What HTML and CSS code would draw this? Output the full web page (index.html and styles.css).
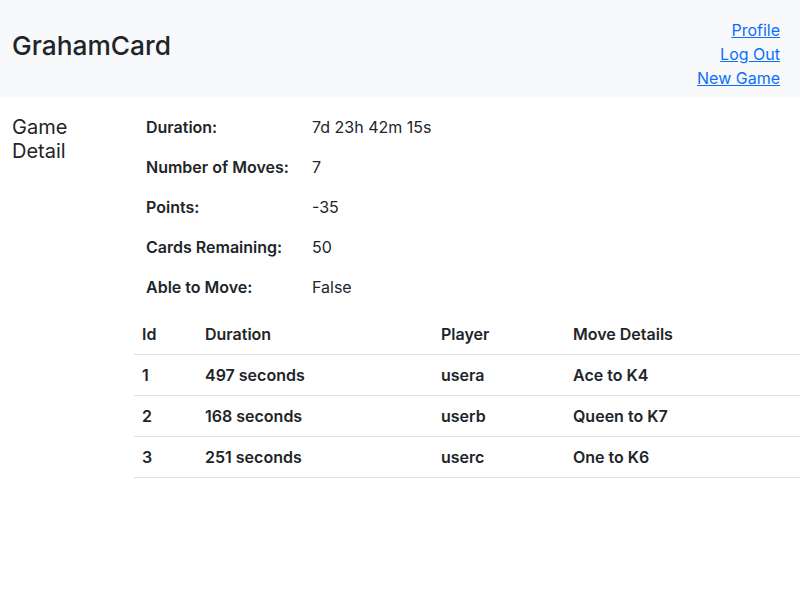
FILE: index.html
```html
<!DOCTYPE html>
<html lang="en">
<head>
<meta charset="utf-8">
<title>GrahamCard</title>
<link rel="stylesheet" href="styles.css">
</head>
<body>
<header class="topbar">
  <div class="brand">GrahamCard</div>
  <nav class="links">
    <a href="#">Profile</a>
    <a href="#">Log Out</a>
    <a href="#">New Game</a>
  </nav>
</header>
<main class="page">
  <aside class="side">
    <h2 class="side-title">Game Detail</h2>
  </aside>
  <section class="content">
    <dl class="details">
      <dt>Duration:</dt><dd>7d 23h 42m 15s</dd>
      <dt>Number of Moves:</dt><dd>7</dd>
      <dt>Points:</dt><dd>-35</dd>
      <dt>Cards Remaining:</dt><dd>50</dd>
      <dt>Able to Move:</dt><dd>False</dd>
    </dl>
    <table class="moves">
      <thead>
        <tr><th class="c-id">Id</th><th class="c-dur">Duration</th><th class="c-player">Player</th><th class="c-move">Move Details</th></tr>
      </thead>
      <tbody>
        <tr><td>1</td><td>497 seconds</td><td>usera</td><td>Ace to K4</td></tr>
        <tr><td>2</td><td>168 seconds</td><td>userb</td><td>Queen to K7</td></tr>
        <tr><td>3</td><td>251 seconds</td><td>userc</td><td>One to K6</td></tr>
      </tbody>
    </table>
  </section>
</main>
</body>
</html>
```
FILE: styles.css
```css
* { box-sizing: border-box; }
html, body {
  margin: 0;
  padding: 0;
  background: #fff;
  color: #212529;
  font-family: Inter, "Noto Sans", "Liberation Sans", sans-serif;
  font-size: 16px;
  line-height: 24px;
}
.topbar {
  display: flex;
  justify-content: space-between;
  align-items: flex-start;
  background: #f8f9fa;
  height: 97px;
  padding: 18px 20px 0 12px;
}
.brand {
  font-size: 26.3px;
  line-height: 32px;
  margin-top: 12px;
  font-weight: 500;
}
.links {
  display: flex;
  flex-direction: column;
  align-items: flex-end;
}
.links a {
  color: #0d6efd;
  text-decoration: underline;
}
.page {
  display: flex;
  padding-top: 18px;
}
.side {
  width: 134px;
  flex: none;
  padding: 0 12px;
}
.side-title {
  margin: 0;
  font-size: 20px;
  line-height: 24px;
  font-weight: 400;
}
.content {
  flex: 1;
}
.details {
  display: grid;
  grid-template-columns: 166px 1fr;
  row-gap: 16px;
  margin: 0 0 15px 0;
  padding-left: 12px;
}
.details dt {
  font-weight: 600;
}
.details dd {
  margin: 0;
}
.moves {
  width: 100%;
  border-collapse: collapse;
  table-layout: fixed;
}
.moves th, .moves td {
  text-align: left;
  padding: 8px;
  font-weight: 600;
  border-bottom: 1px solid #dee2e6;
}
.c-id { width: 63px; }
.c-dur { width: 236px; }
.c-player { width: 132px; }
```
